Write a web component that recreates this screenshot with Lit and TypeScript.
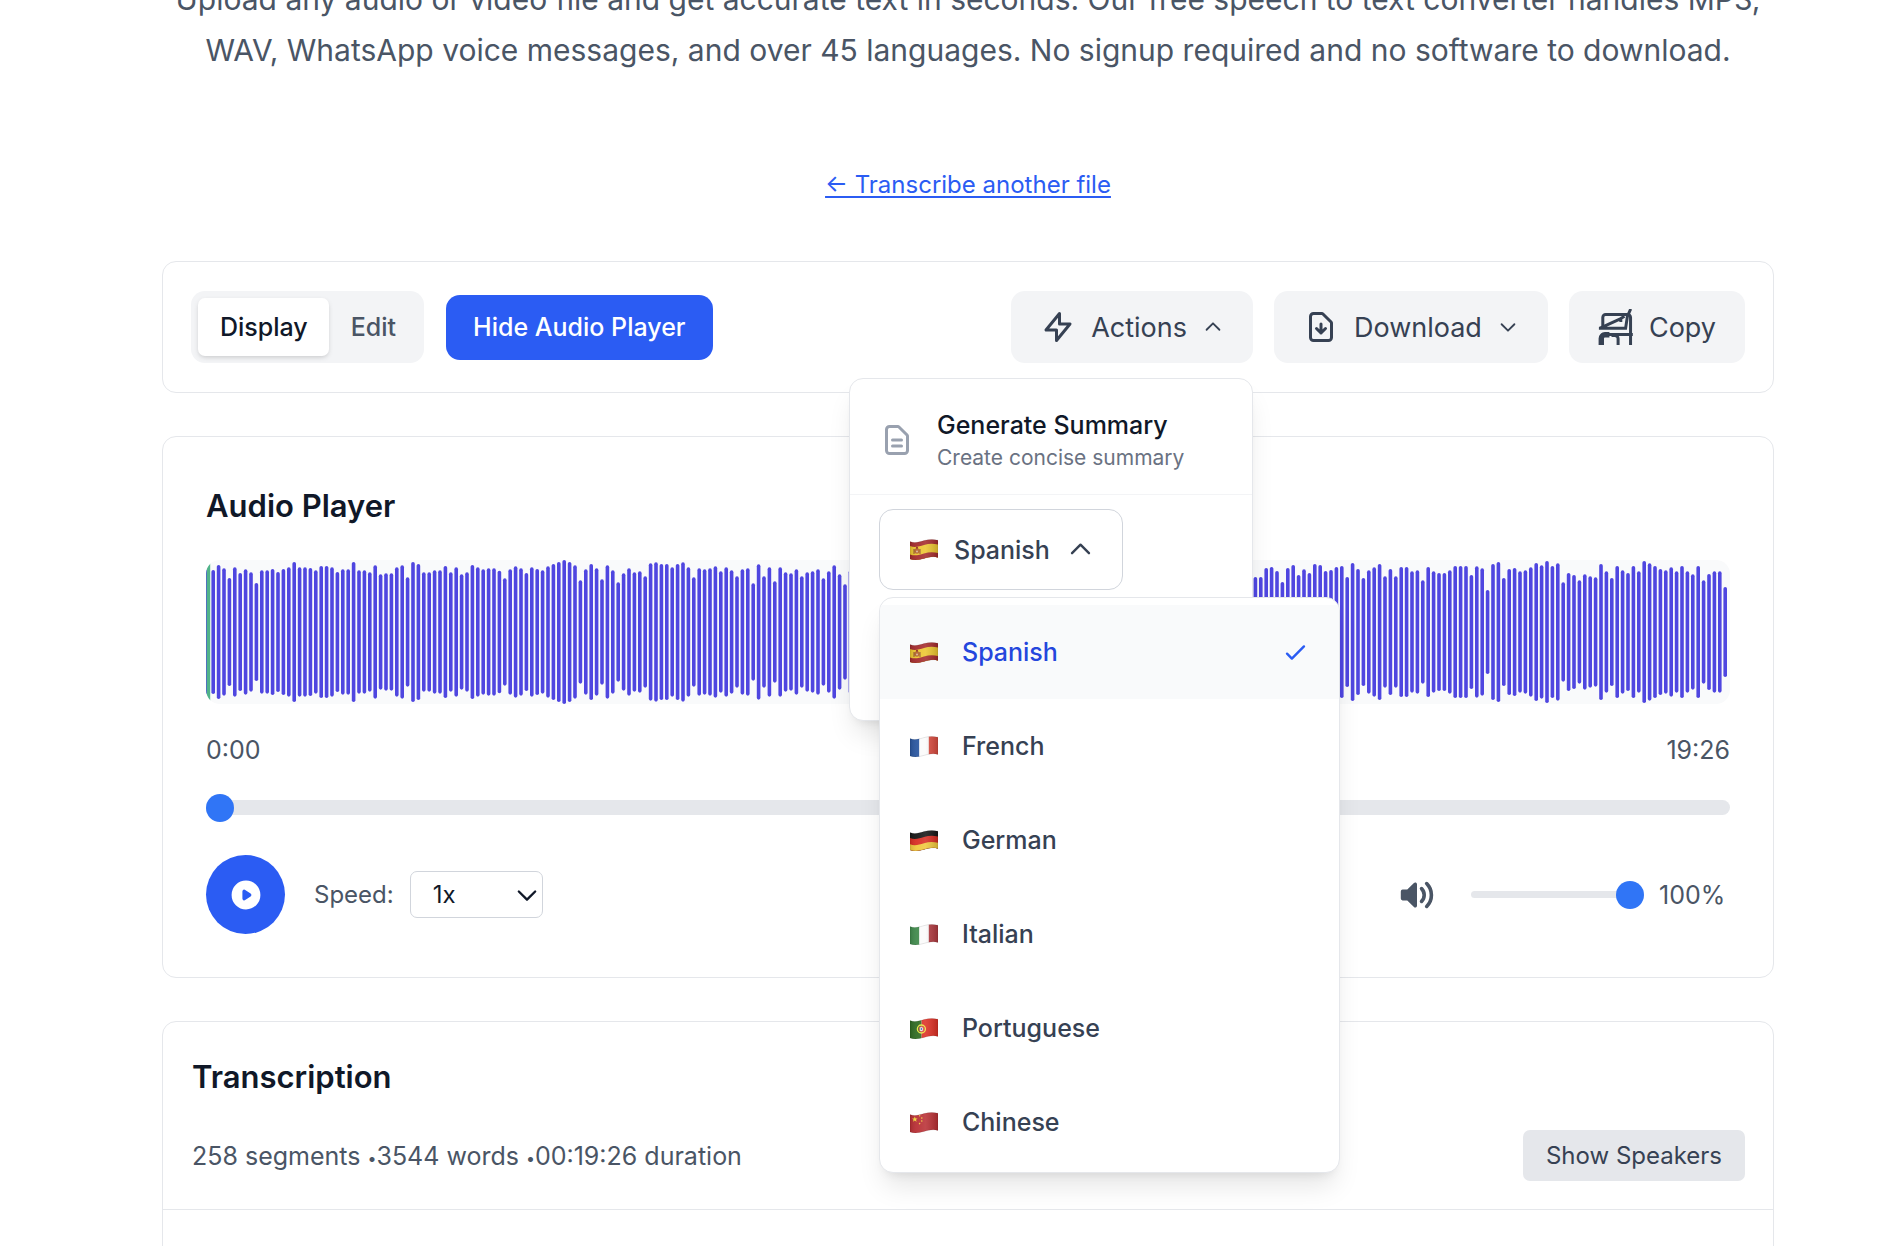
import { LitElement, html, svg, css, nothing, type SVGTemplateResult } from 'lit';
import { customElement, property, state } from 'lit/decorators.js';
import { classMap } from 'lit/directives/class-map.js';

const DOC =
  'M17 21H7a2 2 0 01-2-2V5a2 2 0 012-2h5.586a1 1 0 01.707.293l5.414 5.414a1 1 0 01.293.707V19a2 2 0 01-2 2z';

const STROKE_ICONS: Record<string, string> = {
  bolt: 'M13 10V3L4 14h7v7l9-11h-7z',
  download: `M12 10v6m0 0l-3-3m3 3l3-3${DOC}`,
  summary: `M9 12h6m-6 4h6${DOC}`,
  down: 'M19 9l-7 7-7-7',
  up: 'M5 15l7-7 7 7',
  check: 'M5 13l4 4L19 7',
};

const PLAY =
  'M10 18a8 8 0 100-16 8 8 0 000 16zM9.555 7.168A1 1 0 008 8v4a1 1 0 001.555.832l3-2a1 1 0 000-1.664l-3-2z';
const VOLUME =
  'M9.383 3.076A1 1 0 0110 4v12a1 1 0 01-1.707.707L4.586 13H2a1 1 0 01-1-1V8a1 1 0 011-1h2.586l3.707-3.707a1 1 0 011.09-.217zM14.657 2.929a1 1 0 011.414 0A9.972 9.972 0 0119 10a9.972 9.972 0 01-2.929 7.071 1 1 0 01-1.414-1.414A7.971 7.971 0 0017 10c0-2.21-.894-4.208-2.343-5.657a1 1 0 010-1.414zm-2.829 2.828a1 1 0 011.415 0A5.983 5.983 0 0115 10a5.984 5.984 0 01-1.757 4.243 1 1 0 01-1.415-1.415A3.984 3.984 0 0013 10a3.983 3.983 0 00-1.172-2.828 1 1 0 010-1.415z';

const icon = (name: string, size = 36) => html`
  <svg width=${size} height=${size} viewBox="0 0 24 24" fill="none" stroke="currentColor"
    stroke-width="2" stroke-linecap="round" stroke-linejoin="round" aria-hidden="true">
    <path d=${STROKE_ICONS[name]} />
  </svg>`;

const solidIcon = (d: string) => html`
  <svg width="36" height="36" viewBox="0 0 20 20" fill="currentColor" fill-rule="evenodd" aria-hidden="true">
    <path d=${d} />
  </svg>`;

const copyIcon = html`
  <svg width="36" height="36" viewBox="0 0 24 24" fill="none" stroke="currentColor" stroke-width="2" aria-hidden="true">
    <path d="M3.2 11.5V5.6a1.9 1.9 0 011.9-1.9h14.6a2 2 0 012 2V24" />
    <path d="M1 12.9L15.6 6.2M15.2 8.6V6.4l2.4-1.6M21.8 0L19.6 4.9 18.4 12.9H.6" />
    <path d="M2.4 17H23.2" />
    <path d="M2.2 24v-4.4a2.4 2.4 0 012.4-2.4h3" stroke-width="3.6" />
    <path d="M9 17.6h2.2a2.2 2.2 0 012.2 2.2V24" />
  </svg>`;

/* Flags: a 28x21 cloth with a gentle wave; horizontal bands follow the wave. */
const CLOTH = 'M0 2.6C5 4.6 9 3 14 1.6S23 0 28 1.2V18.4C23 17 19 18 14 19.4S5 21.6 0 20z';
const band = (y: number, color: string) =>
  svg`<path fill=${color} d=${`M0 ${y}c5 2 9 .4 14-1s9-1.6 14-.4V24H0z`} />`;
const pale = (x: number, w: number, color: string) =>
  svg`<rect x=${x} width=${w} height="21" fill=${color} />`;

const FLAGS: Record<string, SVGTemplateResult> = {
  es: svg`${band(-1, '#a42a2c')}${band(7, '#ecc62f')}${band(15.4, '#a42a2c')}
    <circle cx="7" cy="12" r="2.8" fill="#b5642a" /><path d="M4 10v5M10 10v5" stroke="#8a4a2c" stroke-width="1" />
    <circle cx="7" cy="8.8" r="1.1" fill="#8f2b20" /><circle cx="7" cy="12.6" r="1" fill="#d9b8a0" />`,
  fr: svg`${pale(0, 9.4, '#2a569f')}${pale(9.4, 9.4, '#fbfbfb')}${pale(18.8, 9.2, '#d84a3e')}`,
  de: svg`${band(-1, '#151515')}${band(8, '#d92c22')}${band(14.2, '#f0c83c')}`,
  it: svg`${pale(0, 9.4, '#408a4c')}${pale(9.4, 9.4, '#fbfbfb')}${pale(18.8, 9.2, '#b03a40')}`,
  pt: svg`${pale(0, 11.6, '#2f6b22')}${pale(11.6, 16.4, '#dd2f24')}
    <circle cx="11.4" cy="11" r="4" fill="none" stroke="#e8df3e" stroke-width="1.4" />
    <rect x="9.4" y="8.8" width="4" height="4.6" rx="1.4" fill="#f4f4f4" stroke="#d23a34" stroke-width=".8" />
    <circle cx="11.4" cy="11" r=".9" fill="#3b62b0" />`,
  cn: svg`${band(-1, '#b92f34')}
    <path fill="#f5dc3c" d="M4.8 4.4l.8 2h2l-1.6 1.3.6 2.1-1.8-1.2L3 9.8l.6-2.1L2 6.4h2z" />
    <g fill="#f0c83c"><circle cx="9.6" cy="3.8" r=".8" /><circle cx="11.8" cy="6" r=".8" />
    <circle cx="11.8" cy="9" r=".8" /><circle cx="9.6" cy="11.6" r=".8" /></g>`,
};

const flag = (code: string) => html`
  <svg width="28" height="21" viewBox="0 0 28 21" aria-hidden="true">
    <defs>
      <clipPath id="cloth"><path d=${CLOTH} /></clipPath>
      <linearGradient id="fold">
        <stop offset="0" stop-color="#000" stop-opacity=".12" />
        <stop offset=".25" stop-color="#fff" stop-opacity=".06" />
        <stop offset=".55" stop-color="#fff" stop-opacity=".12" />
        <stop offset="1" stop-color="#000" stop-opacity=".16" />
      </linearGradient>
    </defs>
    <g clip-path="url(#cloth)">${FLAGS[code]}</g>
    <path d=${CLOTH} fill="url(#fold)" stroke="#000" stroke-opacity=".16" stroke-width=".6" />
  </svg>`;

const LANGUAGES = [
  { code: 'es', name: 'Spanish' },
  { code: 'fr', name: 'French' },
  { code: 'de', name: 'German' },
  { code: 'it', name: 'Italian' },
  { code: 'pt', name: 'Portuguese' },
  { code: 'cn', name: 'Chinese' },
];

/* Waveform: distance of each bar's tip from the edge, out of a 432-unit height. */
const INTRO = [
  28, 30, 15, 25, 54, 22, 39, 28, 37, 69, 31, 31, 27, 36, 27, 22, 6, 22, 22, 24, 31, 18, 18, 22, 36, 28, 28,
  6, 31, 31, 37, 16, 43, 40, 40, 22, 16, 52, 6, 12, 37, 37, 31, 31, 18, 37, 22, 43, 37, 15, 22, 28, 25, 25,
  32, 55, 28, 19, 25, 39, 22, 27, 31, 19, 12, 6, 0, 6, 16, 61, 28, 12, 25, 58, 16, 31, 67, 40, 25, 37, 34,
  49, 10, 7, 12, 12, 22, 12, 7, 22, 52, 25, 28, 25, 19, 34, 22, 31, 49, 28, 25, 70, 13, 49, 22, 64, 22, 37,
  40, 28, 49, 37, 34, 28, 55, 34, 16, 43, 73,
];
const OUTRO = [
  51, 51, 24, 21, 33, 66, 24, 15, 45, 28, 39, 12, 15, 33, 30, 21, 18, 51, 9, 27, 54, 31, 22, 12, 49, 27, 49,
  21, 21, 34, 31, 61, 21, 34, 39, 39, 31, 18, 18, 18, 45, 19, 25, 90, 12, 6, 54, 27, 24, 34, 31, 22, 9, 16,
  3, 18, 10, 67, 39, 45, 61, 43, 49, 52, 12, 34, 54, 18, 31, 39, 18, 34, 3, 10, 18, 27, 31, 22, 34, 18, 34,
  43, 18, 61, 42, 34, 34, 81,
];
const BARS = [...INTRO, ...INTRO.slice(20, 95), ...OUTRO];

const base = css`
  :host { display: block; font-family: Inter, "Noto Sans", sans-serif; color: #101828; }
  *, *::before, *::after { box-sizing: border-box; }
  button, select { font: inherit; color: inherit; border: 0; background: none; padding: 0; margin: 0; cursor: pointer; }
  svg { display: block; flex: none; }
  h2, p, ul { margin: 0; padding: 0; }
  h2 { font-size: 31px; line-height: 51px; font-weight: 600; }
  .card { background: #fff; border: 1px solid #e5e7eb; border-radius: 14px; }
`;

@customElement('actions-menu')
class ActionsMenu extends LitElement {
  @state() private selected = 'es';

  static styles = [base, css`
    .menu { background: #fff; border: 1px solid #e5e7eb; border-radius: 14px; width: 404px; padding-bottom: 130px;
      box-shadow: 0 18px 27px -5px rgb(0 0 0 / .1), 0 7px 11px -7px rgb(0 0 0 / .1); }
    .item { display: flex; align-items: center; gap: 22px; width: 100%; padding: 28px 29px 22px; text-align: left;
      border-bottom: 1px solid #f3f4f6; }
    .item svg { color: #99a1af; }
    .texts { display: flex; flex-direction: column; }
    .title { font-size: 25px; line-height: 36px; font-weight: 500; }
    .sub { font-size: 21px; line-height: 29px; color: #6a7282; }
    .picker { position: relative; padding: 14px 29px 0; }
    .current { display: flex; align-items: center; height: 81px; padding: 0 27px 0 30px; gap: 16px;
      border: 1px solid #d1d5dc; border-radius: 14px; font-size: 25px; font-weight: 500; color: #364153; }
    .list { position: absolute; top: 102px; left: 29px; width: 461px; padding: 7px 0 3px; list-style: none;
      background: #fff; border: 1px solid #e5e7eb; border-radius: 14px; overflow: hidden;
      box-shadow: 0 18px 27px -5px rgb(0 0 0 / .1), 0 7px 11px -7px rgb(0 0 0 / .1); }
    .option { display: flex; align-items: center; gap: 24px; width: 100%; height: 94px; padding: 0 29px 0 30px;
      font-size: 25px; font-weight: 500; color: #364153; text-align: left; }
    .option span { flex: 1; }
    .option.on { background: #f9fafb; color: #2446dd; }
    .option.on .tick { color: #2b5cf3; }
  `];

  render() {
    const current = LANGUAGES.find((l) => l.code === this.selected)!;
    return html`
      <div class="menu">
        <button class="item">
          ${icon('summary')}
          <span class="texts">
            <span class="title">Generate Summary</span>
            <span class="sub">Create concise summary</span>
          </span>
        </button>
        <div class="picker">
          <button class="current" aria-haspopup="listbox" aria-expanded="true">
            ${flag(current.code)}<span>${current.name}</span>${icon('up', 29)}
          </button>
          <ul class="list">
            ${LANGUAGES.map((l) => {
              const on = l.code === this.selected;
              return html`<li>
                <button class=${classMap({ option: true, on })} @click=${() => (this.selected = l.code)}>
                  ${flag(l.code)}<span>${l.name}</span>
                  ${on ? html`<div class="tick">${icon('check', 29)}</div>` : nothing}
                </button>
              </li>`;
            })}
          </ul>
        </div>
      </div>`;
  }
}

@customElement('audio-player')
class AudioPlayer extends LitElement {
  @property() duration = '';

  static styles = [base, css`
    .player { padding: 43px; color: #4a5565; font-size: 25px; }
    h2 { color: #101828; margin-bottom: 29px; }
    .wave { height: 144px; border-radius: 14px; overflow: hidden; background: #f9fafb; }
    .wave svg { width: 100%; height: 100%; }
    .times { display: flex; justify-content: space-between; line-height: 36px; padding: 28px 0 32px; }
    input { appearance: none; display: block; margin: 0; background: #e5e7eb; border-radius: 8px; }
    input::-webkit-slider-thumb { appearance: none; width: 28px; height: 28px; border-radius: 50%; background: #3075f6; }
    .seek { width: 100%; height: 15px; }
    .controls { display: flex; justify-content: space-between; margin-top: 40px; }
    .group { display: flex; align-items: center; }
    .play { display: grid; place-items: center; width: 79px; height: 79px; margin-right: 29px; border-radius: 50%;
      background: #2b5cf3; color: #fff; }
    label, select { font-size: 24px; }
    .speed { display: grid; align-items: center; margin-left: 16px; }
    .speed > * { grid-area: 1 / 1; }
    .speed svg { justify-self: end; margin-right: 2px; pointer-events: none; color: #101828; }
    select { appearance: none; width: 133px; height: 47px; padding: 0 22px; border: 1px solid #d1d5dc;
      border-radius: 7px; background: #fff; color: #101828; }
    .mute { padding: 0 14px; margin-right: 22px; }
    .volume { width: 173px; height: 7px; }
    output { width: 71px; margin-left: 15px; }
  `];

  render() {
    return html`
      <section class="card player">
        <h2>Audio Player</h2>
        <div class="wave">
          <svg viewBox="0 0 1524 432" preserveAspectRatio="none" aria-hidden="true">
            ${BARS.map((inset, i) => svg`<rect x=${(i * 5.4).toFixed(1)} y=${inset} width="3.6"
              height=${432 - 2 * inset} rx="1.8" ry="5.4" fill="#4f46e0" />`)}
            <rect x=".6" width="3.6" height="432" fill="#50b389" />
          </svg>
        </div>
        <div class="times"><span>0:00</span><span>${this.duration}</span></div>
        <input class="seek" type="range" min="0" max="1166" value="0" aria-label="Seek" />
        <div class="controls">
          <div class="group">
            <button class="play" aria-label="Play">${solidIcon(PLAY)}</button>
            <label for="speed">Speed:</label>
            <div class="speed">
              <select id="speed">
                <option>0.5x</option><option selected>1x</option><option>1.5x</option><option>2x</option>
              </select>
              ${icon('down', 28)}
            </div>
          </div>
          <div class="group">
            <button class="mute" aria-label="Mute">${solidIcon(VOLUME)}</button>
            <input class="volume" id="volume" type="range" min="0" max="100" value="100" aria-label="Volume" />
            <output for="volume">100%</output>
          </div>
        </div>
      </section>`;
  }
}

@customElement('app-root')
class AppRoot extends LitElement {
  @state() private mode = 'Display';
  @state() private showPlayer = true;

  static styles = [base, css`
    :host { overflow: hidden; background: #fff; height: 100vh; }
    main { display: flex; flex-direction: column; padding: 0 112px 0 162px; }
    .intro { margin-top: -26px; font-size: 30px; line-height: 51px; color: #4a5565; text-align: center; }
    .again { align-self: center; margin: 91px 0 58px; font-size: 24px; line-height: 36px; color: #2b5cf3;
      text-decoration: underline; text-underline-offset: 3px; text-decoration-thickness: 2px; }
    .sections { display: flex; flex-direction: column; gap: 43px; }
    .toolbar { display: flex; align-items: center; gap: 22px; padding: 29px 28px; }
    .modes { display: flex; padding: 7px; height: 72px; border-radius: 14px; background: #f3f4f6; }
    .mode { padding: 0 21px 0 22px; border-radius: 7px; font-size: 25px; font-weight: 500; color: #4a5565; }
    .mode.on { background: #fff; color: #101828; box-shadow: 0 2px 5px rgb(0 0 0 / .1), 0 2px 4px -2px rgb(0 0 0 / .1); }
    .toggle { height: 65px; padding: 0 27px; border-radius: 14px; background: #2b5cf3; color: #fff;
      font-size: 25px; font-weight: 500; }
    .tools { display: flex; gap: 21px; margin-left: auto; }
    .anchor { position: relative; }
    .tool { display: flex; align-items: center; gap: 15px; height: 72px; padding: 0 29px; border-radius: 14px;
      background: #f3f4f6; color: #364153; font-size: 27px; }
    actions-menu { position: absolute; top: 87px; right: 0; z-index: 2; }
    .head { padding: 29px 28px 28px 29px; border-bottom: 1px solid #e5e7eb; }
    .meta { display: flex; justify-content: space-between; align-items: center; margin-top: 28px;
      font-size: 25px; color: #4a5565; }
    .dot { font-size: 16px; line-height: 1; vertical-align: middle; }
    .speakers { height: 51px; padding: 0 23px; border-radius: 7px; background: #e5e7eb; color: #364153; font-size: 24px; }
    .body { height: 200px; }
  `];

  render() {
    return html`
      <main>
        <p class="intro">
          Upload any audio or video file and get accurate text in seconds. Our free speech to text converter handles
          MP3, WAV, WhatsApp voice messages, and over 45 languages. No signup required and no software to download.
        </p>
        <a class="again" href="#">← Transcribe another file</a>
        <div class="sections">
          <div class="card toolbar">
            <div class="modes">
              ${['Display', 'Edit'].map((m) => html`
                <button class=${classMap({ mode: true, on: m === this.mode })} @click=${() => (this.mode = m)}>${m}</button>`)}
            </div>
            <button class="toggle" @click=${() => (this.showPlayer = !this.showPlayer)}>
              ${this.showPlayer ? 'Hide' : 'Show'} Audio Player
            </button>
            <div class="tools">
              <div class="anchor">
                <button class="tool" aria-expanded="true">${icon('bolt')}<span>Actions</span>${icon('up', 22)}</button>
                <actions-menu></actions-menu>
              </div>
              <button class="tool">${icon('download')}<span>Download</span>${icon('down', 22)}</button>
              <button class="tool">${copyIcon}<span>Copy</span></button>
            </div>
          </div>
          ${this.showPlayer ? html`<audio-player duration="19:26"></audio-player>` : nothing}
          <section class="card">
            <header class="head">
              <h2>Transcription</h2>
              <div class="meta">
                <span>258 segments <span class="dot">•</span>3544 words <span class="dot">•</span>00:19:26 duration</span>
                <button class="speakers">Show Speakers</button>
              </div>
            </header>
            <div class="body"></div>
          </section>
        </div>
      </main>`;
  }
}
